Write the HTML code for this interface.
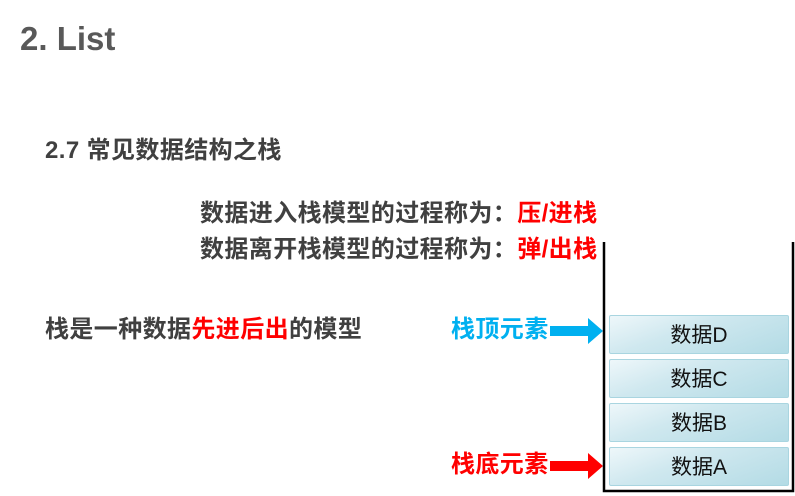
<!DOCTYPE html>
<html><head><meta charset="utf-8"><style>
body{margin:0;width:795px;height:496px;background:#fff;position:relative;overflow:hidden;font-family:"Liberation Sans","Noto Sans CJK SC",sans-serif}
.t{position:absolute;white-space:nowrap;font-weight:bold;line-height:1;font-size:24px;letter-spacing:0.4px}
.r{color:#f00}
.box{position:absolute;left:609px;width:180px;height:39px;background:linear-gradient(160deg,#eef7fa 0%,#cfe8ef 40%,#b3dbe5 100%);border:1px solid #a9d5e0;border-radius:2px;box-sizing:border-box;font-size:21px;color:#111;text-align:center;line-height:39px}
</style></head><body>
<div class="t" style="left:20px;top:22px;font-size:33px;color:#595959;letter-spacing:0">2. List</div>
<div class="t" style="left:45px;top:139px;color:#404040">2.7 常见数据结构之栈</div>
<div class="t" style="left:200px;top:202px;color:#404040">数据进入栈模型的过程称为：<span class="r">压/进栈</span></div>
<div class="t" style="left:200px;top:238px;color:#404040">数据离开栈模型的过程称为：<span class="r">弹/出栈</span></div>
<div class="t" style="left:45px;top:318px;color:#404040">栈是一种数据<span class="r">先进后出</span>的模型</div>
<div class="t" style="left:451px;top:318px;color:#00b0f0">栈顶元素</div>
<div class="t" style="left:451px;top:453px;color:#f00">栈底元素</div>
<svg style="position:absolute;left:0;top:0" width="795" height="496">
<polygon points="550,326 588,326 588,318 603,331 588,344 588,336 550,336" fill="#00b0f0"/>
<polygon points="550,461 588,461 588,453 603,466 588,479 588,471 550,471" fill="#f00"/>
<polyline points="604,242 604,491 793,491 793,242" fill="none" stroke="#000" stroke-width="2.5"/>
</svg>
<div class="box" style="top:315px">数据D</div>
<div class="box" style="top:359px">数据C</div>
<div class="box" style="top:403px">数据B</div>
<div class="box" style="top:447px">数据A</div>
</body></html>
